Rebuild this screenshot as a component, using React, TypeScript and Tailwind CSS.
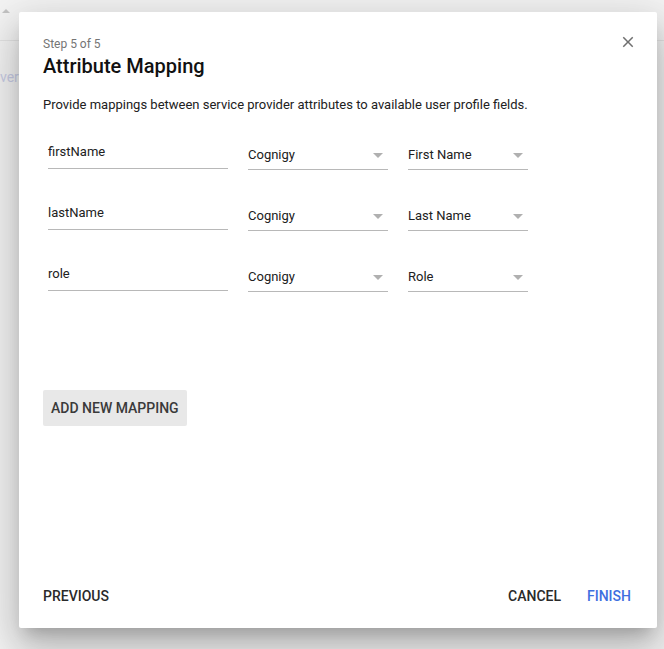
const rows = [
  { attr: "firstName", source: "Cognigy", field: "First Name" },
  { attr: "lastName", source: "Cognigy", field: "Last Name" },
  { attr: "role", source: "Cognigy", field: "Role" },
];

const Select = ({ value, width }: { value: string; width: string }) => (
  <div className={`${width} flex items-center justify-between border-b border-[#b8b8b8] pt-[3px] pb-[4px] pr-[5px] text-[13px] leading-5`}>
    <span className="text-[#212121]">{value}</span>
    <span className="h-0 w-0 border-x-[5px] border-t-[5px] border-x-transparent border-t-[#b0b0b0]" />
  </div>
);

const App = () => {
  return (
    <div className="relative h-[649px] w-full overflow-hidden bg-[#f4f4f4] font-['Roboto',sans-serif]">
      {/* page behind the dialog */}
      <div className="h-[41px] border-b border-[#e4e4e4]">
        <div className="ml-[2px] pt-[9px]">
          <div className="h-0 w-0 border-x-[4px] border-b-[4px] border-x-transparent border-b-[#c4c4c4]" />
        </div>
      </div>
      <div className="pt-[26px] text-sm leading-5 text-[#c9cde6]">ver</div>

      {/* dialog */}
      <div className="absolute left-[19px] top-[12px] flex h-[616px] w-[638px] flex-col rounded-[2px] bg-white shadow-[0_11px_15px_-7px_rgba(0,0,0,0.2),0_24px_38px_3px_rgba(0,0,0,0.14),0_9px_46px_8px_rgba(0,0,0,0.12)]">
        <button className="absolute right-[20px] top-[21px] h-[18px] w-[18px] text-[#6f6f6f]">
          <svg viewBox="0 0 24 24" className="h-[18px] w-[18px]" fill="currentColor">
            <path d="M19 6.41L17.59 5 12 10.59 6.41 5 5 6.41 10.59 12 5 17.59 6.41 19 12 13.41 17.59 19 19 17.59 13.41 12z" />
          </svg>
        </button>

        <div className="px-6 pt-6">
          <p className="text-xs leading-4 text-[#757575]">Step 5 of 5</p>
          <h2 className="text-[20px] font-medium leading-7 text-[#111]">Attribute Mapping</h2>
          <p className="mt-[15px] text-[13px] leading-5 text-[#212121]">
            Provide mappings between service provider attributes to available user profile fields.
          </p>
        </div>

        <div className="mt-[27px] flex flex-col pl-[29px]">
          {rows.map((r) => (
            <div key={r.attr} className="flex h-[61px] items-start gap-5">
              <div className="w-[180px] border-b border-[#b8b8b8] pb-[6px] text-[13px] leading-5 text-[#212121]">
                {r.attr}
              </div>
              <Select value={r.source} width="w-[140px]" />
              <Select value={r.field} width="w-[120px]" />
            </div>
          ))}
        </div>

        <div className="mt-[65px] px-6">
          <button className="h-9 rounded-[2px] bg-[#e8e8e8] px-2 text-sm font-medium uppercase text-[#3a3a3a]">
            Add new mapping
          </button>
        </div>

        <div className="mt-auto flex items-center justify-between pb-[14px] pl-4 pr-[18px]">
          <button className="h-9 px-2 text-sm font-medium uppercase text-[#2a2a2a]">Previous</button>
          <div className="flex gap-[10px]">
            <button className="h-9 px-2 text-sm font-medium uppercase text-[#2a2a2a]">Cancel</button>
            <button className="h-9 px-2 text-sm font-medium uppercase text-[#3f6fdf]">Finish</button>
          </div>
        </div>
      </div>
    </div>
  );
};

export default App;
